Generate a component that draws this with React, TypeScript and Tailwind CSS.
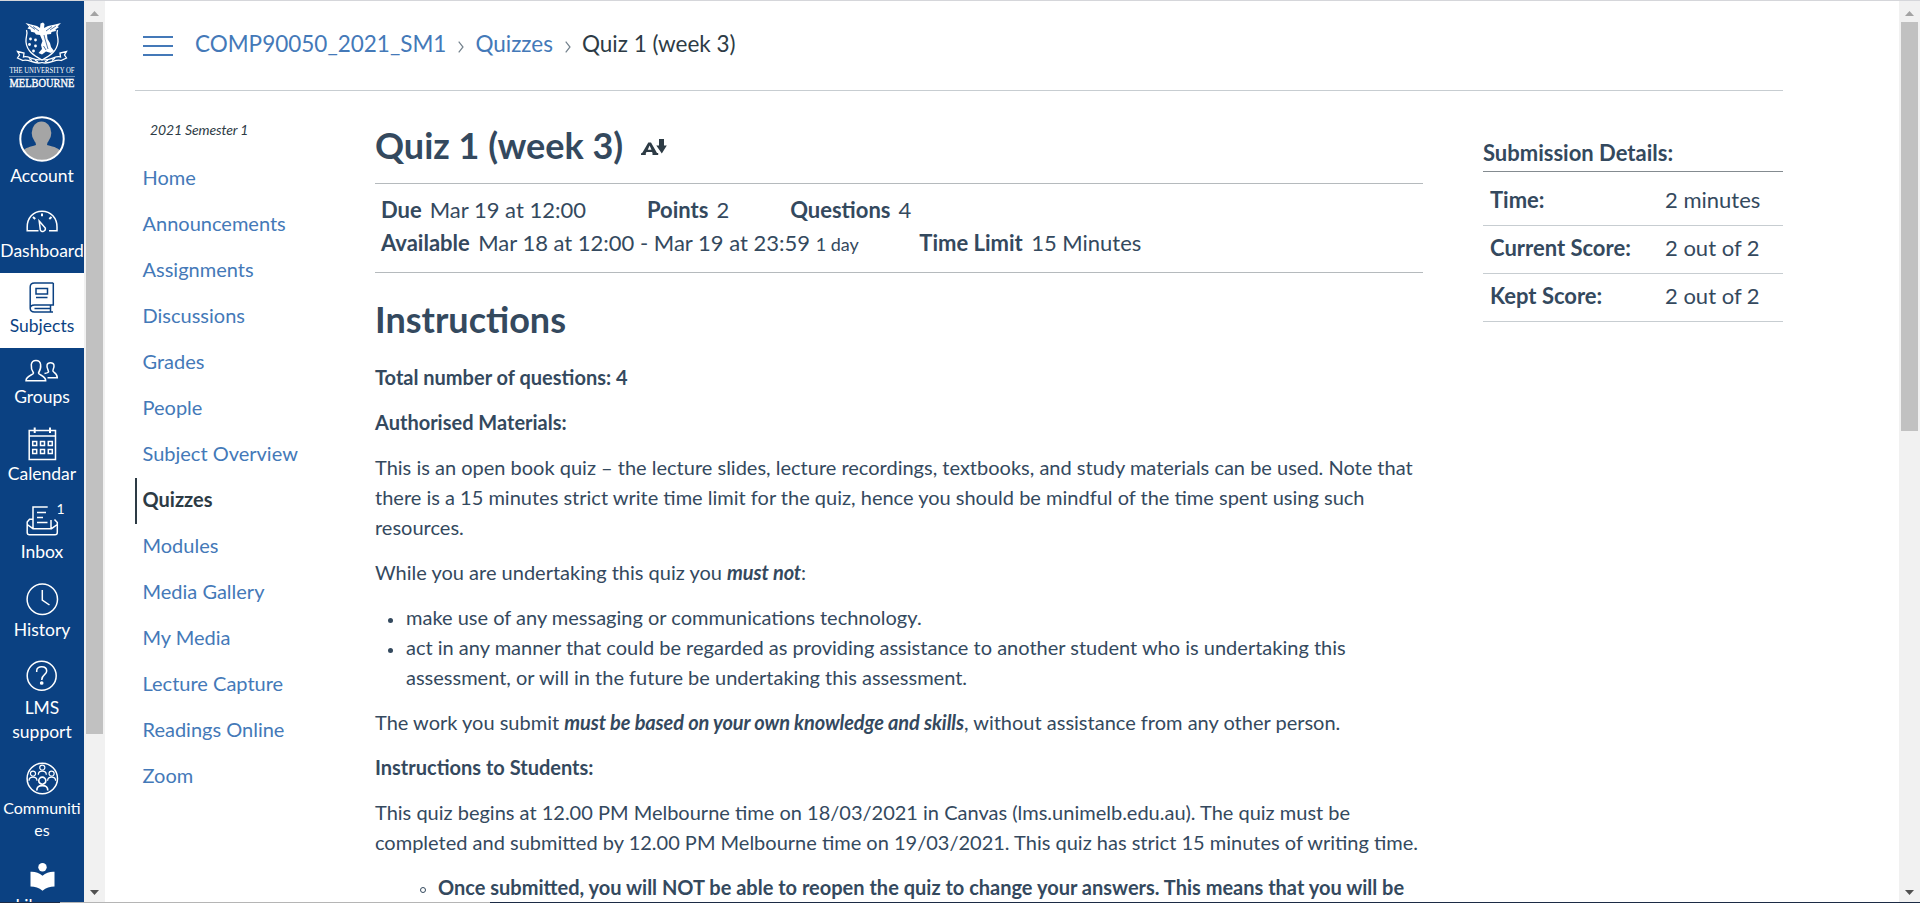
import React from "react";

type NavItem = { label: string; height: string; icon: React.ReactNode; active?: boolean; text: string };

const svgBase = {
  fill: "none",
  stroke: "currentColor",
  strokeWidth: 1.5,
};

function Crest() {
  return (
    <svg width="68" height="68" viewBox="-1 0 68 68" className="block overflow-visible">
      <g fill="none" stroke="#fff" strokeWidth="1.300">
        <path d="M17.500 8 C19 12 16.500 15 17 20 C18 29 24 33 33 38 C42 33 48 29 49 20 C49.500 15 47 12 48.500 8" />
        <path d="M8.500 29.500 L15 31 L14.500 35 C20 33 25 40 33 37.500 C41 40 46 33 51.500 35 L51 31 L57.500 29.500 L55.500 33 L57.500 36 L52 38.500 C46 36.500 41 43 33 40.500 C25 43 20 36.500 14 38.500 L8.500 36 L10.500 33Z" />
        <path d="M20 36.500 L23 38.500 M26 38 L29 40 M36 40 L39 38 M43 38.500 L46 36" />
      </g>
      <g fill="#fff">
        <path d="M16.500 1 L22 2.500 L28 4 L31 6 L31.500 1.500 L34 0.500 L35.500 2 L35 6 L39 4 L45 2.800 L52 1 L48.500 4.500 L50 5 L46.500 7.500 L47 9 L42.500 10 L42 12 L38 12.500 L38.500 17 L41 21 L42 25 L45 29 L42 31 L37 29.500 L33 32.500 L29.500 31 L33 27 L32 23 L33.500 19 L31 13 L27 12.500 L25.500 10.500 L22 9.800 L21.500 7.500 L18.500 6.500 L20 4.500Z" />
        <circle cx="21.500" cy="17" r="1.400" />
        <circle cx="26.500" cy="18" r="1.400" />
        <circle cx="20.500" cy="22.500" r="1.400" />
        <circle cx="26.500" cy="24" r="1.400" />
        <circle cx="24.500" cy="29" r="1.400" />
        <rect y="54" width="66" height="0.800" opacity="0.5" />
      </g>
      <path d="M24 4.500 L30 9 M43 4.500 L37 9 M20.500 3.500 L26 7.500 M47 4 L41 8 M36 17 L39 27 M34.500 24 L37 28 M35 13 L36 17" stroke="#0b4182" strokeWidth="0.700" fill="none" />
      <text x="0.500" y="50.700" textLength="65" lengthAdjust="spacingAndGlyphs" fontFamily="Liberation Serif, serif" fontSize="8.200" fill="#fff">THE UNIVERSITY OF</text>
      <text x="0.500" y="64.700" textLength="65" lengthAdjust="spacingAndGlyphs" fontFamily="Liberation Serif, serif" fontSize="11.500" stroke="#fff" strokeWidth="0.350" fill="#fff">MELBOURNE</text>
    </svg>
  );
}

const Avatar = () => (
  <svg width="46" height="46" viewBox="0 0 46 46">
    <defs>
      <clipPath id="face"><circle cx="23" cy="23" r="21.500" /></clipPath>
    </defs>
    <g clipPath="url(#face)" fill="#a5a5a5">
      <ellipse cx="22.500" cy="17" rx="9.800" ry="11.500" />
      <path d="M16 24 H29 L28 29 C36 31 40 32 43 37 L46 46 H0 L3 36 C7 31 11 31 17 29Z" />
    </g>
    <circle cx="23" cy="23" r="21.700" fill="none" stroke="#fff" strokeWidth="2" />
  </svg>
);

const Dash = () => (
  <svg width="33" height="23" viewBox="0 0 33 23" {...svgBase}>
    <path d="M12.500 20.700 H1.200 V17 C1.200 8 7 1.200 16 1.200 S31 8 31 17 V20.700 H23" />
    <path d="M13.200 11 L19.300 18 C20 21.500 15.300 23 14.300 19.700Z" />
    <path d="M16 3.500 V6.200 M7 7 L9.200 9 M25.500 7 L23.300 9" strokeWidth="2" />
  </svg>
);
const Book = () => (
  <svg width="26" height="31" viewBox="0 0 26 31" {...svgBase}>
    <path d="M24.300 1 V23 H5.500 C2.500 23 1.200 24.500 1.200 26.300 C1.200 28.500 2.500 30 5.500 30 H24 M5.500 1 H24.300 M5.500 1 C2.500 1 1.200 2.500 1.200 5 V26.300" />
    <path d="M7 6.500 H18.500 V12 H7Z M7 15.500 H18.500 M5.500 26.500 H22 M21.500 23 V30" />
  </svg>
);
const People = () => (
  <svg width="34" height="23" viewBox="0 0 34 23" {...svgBase}>
    <path d="M8.500 14 C6.500 11 6 8 6.300 5.500 C7 0 15 0 15.600 5.500 C16 8 15.300 11 13.500 14 C13.300 16 20.700 16.500 20.700 21.700 H1 C1 16.500 8.700 16 8.500 14Z" />
    <path d="M19.500 14.500 C22.500 14 24.500 13.500 23 11 C21.200 7 21.500 3.700 25.500 3.700 C29.500 3.700 29.800 7 28 11 C26.500 13.500 32.300 13 32.300 18.700 H22.500" />
  </svg>
);
const Cal = () => (
  <svg width="29" height="34" viewBox="0 0 29 34" {...svgBase}>
    <path d="M1.200 3.500 H27.500 V32.500 H1.200Z M1.200 9 H27.500" />
    <path d="M6.700 0.500 V6 M22 0.500 V6" strokeWidth="2" />
    <path d="M4.700 14.500 h4 v4 h-4Z M12.500 14.500 h4 v4 h-4Z M20.300 14.500 h4 v4 h-4Z M4.700 22.500 h4 v4 h-4Z M12.500 22.500 h4 v4 h-4Z M20.300 22.500 h4 v4 h-4Z" />
  </svg>
);
const Inbox = () => (
  <div className="relative flex">
    <svg width="33" height="30" viewBox="0 0 33 30" {...svgBase}>
      <path d="M7 22.500 V1 H21.700 M25 14 V22.500 M6.500 13.200 H3.500 L1.200 16 V26.500 C1.200 28 2 28.800 3.500 28.800 H29 C30.500 28.800 31.300 28 31.300 26.500 V16.500 L28.500 13.500 M1.200 18.500 L7 22.700 H25.500 L31.300 18.500 M11 6.500 H20 M11 11.500 H17 M11 16.500 H21.500" />
    </svg>
    <span className="absolute left-[31px] top-[-6px] text-[14px] leading-[18px]">1</span>
  </div>
);
const History = () => (
  <svg width="33" height="33" viewBox="0 0 33 33" {...svgBase}>
    <circle cx="16.300" cy="16.300" r="15.200" />
    <path d="M16.300 7 V17 L23.500 22" />
  </svg>
);
const Help = () => (
  <svg width="33" height="32" viewBox="0 0 33 32" {...svgBase}>
    <circle cx="15.700" cy="15.800" r="14.500" />
    <path d="M10.700 12 V10.500 C10.700 5.500 20.700 5.500 20.700 11 C20.700 15 15.700 14.500 15.700 20" />
    <circle cx="15.700" cy="23" r="1.100" fill="currentColor" />
  </svg>
);
function Person({ x, y, s }: { x: number; y: number; s: number }) {
  return (
    <g transform={`translate(${x} ${y}) scale(${s})`}>
      <circle cx="0" cy="-3" r="3.200" />
      <path d="M-5 6 C-5 2 -3 1.500 0 1.500 S5 2 5 6" />
    </g>
  );
}
const Communities = () => (
  <svg width="33" height="33" viewBox="0 0 33 33" {...svgBase}>
    <circle cx="16.300" cy="16.500" r="15.200" />
    <Person x={16.3} y={8} s={0.8} />
    <Person x={7} y={14} s={0.8} />
    <Person x={25.6} y={14} s={0.8} />
    <Person x={16.3} y={22} s={1.1} />
  </svg>
);
const Library = () => (
  <svg width="25" height="28" viewBox="0 0 25 28" fill="currentColor">
    <circle cx="12.500" cy="4.200" r="4.200" />
    <path d="M0.500 8.800 C5 8.500 9 9.700 12.500 12.700 C16 9.700 20 8.500 24.500 8.800 V23.500 C20 23.500 16 24.500 12.500 27.700 C9 24.500 5 23.500 0.500 23.500Z" />
  </svg>
);

const navItems: NavItem[] = [
  { label: "Account", height: "h-[83px] pt-[4px]", icon: <Avatar />, text: "mt-px" },
  { label: "Dashboard", height: "h-[78px] pt-[15px]", icon: <Dash />, text: "mt-[5px]" },
  { label: "Subjects", height: "h-[75px] pt-[9px]", icon: <Book />, active: true, text: "" },
  { label: "Groups", height: "h-[71px] pt-[11px]", icon: <People />, text: "mt-[2px]" },
  { label: "Calendar", height: "h-[77px] pt-[8px]", icon: <Cal />, text: "" },
  { label: "Inbox", height: "h-[81px] pt-[10px]", icon: <Inbox />, text: "mt-[3px]" },
  { label: "History", height: "h-[77px] pt-[6px]", icon: <History />, text: "mt-px" },
];

const menu = ["Home", "Announcements", "Assignments", "Discussions", "Grades", "People", "Subject Overview", "Quizzes", "Modules", "Media Gallery", "My Media", "Lecture Capture", "Readings Online", "Zoom"];

const scores = [
  ["Time:", "2 minutes", "h-[54px] pt-[2px]"],
  ["Current Score:", "2 out of 2", "h-[48px] pb-[3px]"],
  ["Kept Score:", "2 out of 2", "h-[48px] pb-[3px]"],
];

function Scrollbar({ thumb }: { thumb: string }) {
  return (
    <div className="flex h-full w-[21px] shrink-0 flex-col items-center bg-[#f1f1f1]">
      <div className="flex h-[21px] items-center pt-[3px]">
        <svg width="9" height="5" viewBox="0 0 9 5"><path d="M0 5 L4.500 0 L9 5Z" fill="#a3a3a3" /></svg>
      </div>
      <div className={`w-[17px] bg-[#c1c1c1] ${thumb}`} />
      <div className="mt-auto mb-[7px] flex">
        <svg width="9" height="5" viewBox="0 0 9 5"><path d="M0 0 L4.500 5 L9 0Z" fill="#505050" /></svg>
      </div>
    </div>
  );
}

const Chevron = () => (
  <svg width="6" height="12" viewBox="0 0 6 12" fill="none" stroke="#73818c" strokeWidth="1.200" className="mr-[11px] ml-[12px] mt-[5px]"><path d="M0.700 0.700 L5 6 L0.700 11.300" /></svg>
);

function Bullet({ children }: { children: React.ReactNode }) {
  return (
    <li className="flex">
      <i className="mt-[16px] mr-[13px] ml-[13px] size-[5px] shrink-0 rounded-full bg-[#34495e]" />
      <span>{children}</span>
    </li>
  );
}

export default function App() {
  return (
    <div className="flex h-[903px] w-[1920px] flex-col overflow-hidden bg-white font-['Lato',sans-serif] text-[20px] leading-[30px] text-[#2d3b45]">
      <div className="h-px shrink-0 bg-[#d5d6da]" />
      <div className="flex min-h-0 flex-1">
        <nav className="flex h-full w-[84px] shrink-0 flex-col overflow-hidden bg-[#0b4182] text-[17.500px] text-white">
          <div className="flex h-[111px] shrink-0 justify-center pt-[21px]"><Crest /></div>
          {navItems.map((n) => (
            <div key={n.label} className={`flex shrink-0 flex-col items-center ${n.height} ${n.active ? "bg-white text-[#0b4182]" : ""}`}>
              {n.icon}
              <span className={`leading-[26px] ${n.text}`}>{n.label}</span>
            </div>
          ))}
          <div className="flex h-[100px] shrink-0 flex-col items-center pt-[6px]">
            <Help />
            <span className="mt-[4px] text-center leading-[24px]">LMS<br />support</span>
          </div>
          <div className="flex h-[101px] shrink-0 flex-col items-center pt-[8px]">
            <Communities />
            <span className="mt-[2px] text-center text-[16px] leading-[22px]">Communiti<br />es</span>
          </div>
          <div className="flex flex-col items-center pt-[8px]"><Library /><span className="mt-[4px] leading-[22px]">Library</span></div>
        </nav>
        <Scrollbar thumb="h-[712px]" />
        <main className="ml-[30px] flex w-[1648px] shrink-0 flex-col">
          <header className="flex h-[90px] shrink-0 items-start border-b border-[#c7cdd1] pt-[28px] text-[22.500px]">
            <div className="mt-[7px] ml-[8px] mr-[22px] flex h-5 w-[30px] flex-col justify-between">
              <i className="h-[2px] bg-[#4479b8]" /><i className="h-[2px] bg-[#4479b8]" /><i className="h-[2px] bg-[#4479b8]" />
            </div>
            <div className="flex items-center">
              <a className="text-[#4479b8]">COMP90050_2021_SM1</a><Chevron /><a className="text-[#4479b8]">Quizzes</a><Chevron /><span>Quiz 1 (week 3)</span>
            </div>
          </header>
          <div className="flex">
            <aside className="w-[240px] shrink-0 pt-[24px]">
              <p className="pl-[15px] text-[14px] leading-[30px] tracking-[-0.130px] italic">2021 Semester 1</p>
              <ul className="mt-[11px]">
                {menu.map((m) => (
                  <li key={m} className={`flex h-[46px] items-center pb-[4px] ${m === "Quizzes" ? "border-l-2 border-[#2d3b45] pl-[5.500px] font-bold" : "pl-[7.500px] text-[#4479b8]"}`}>{m}</li>
                ))}
              </ul>
            </aside>
            <article className="w-[1048px] shrink-0 text-[#34495e]">
              <div className="flex h-[93px] items-start border-b border-[#b5babd] pt-[27px]">
                <h1 className="text-[36px] leading-[54px] font-bold">Quiz 1 (week 3)</h1>
                <svg width="27" height="18" viewBox="0 0 27 18" className="mt-[20px] ml-[18px]" fill="#2d3b45">
                  <path fillRule="evenodd" d="M7.300 4.500 H10 L16 15 H17.200 V17 H11.500 V15 L11 14 H5.500 L4.800 15.200 V17 H0 V15.500 L1.500 14.500Z M6.800 11.800 H10.500 L8.600 7.500Z" />
                  <path d="M18 1 H23 V7.500 H25.800 L20.800 15.500 L15.300 7.500 H18Z" />
                </svg>
              </div>
              <div className="flex h-[89px] flex-col border-b border-[#b5babd] pt-[9px] pl-[6px] text-[22px] leading-[33px]">
                <div className="flex gap-[61px]"><span><b className="mr-[8px]">Due</b>Mar 19 at 12:00</span><span><b className="mr-[8px]">Points</b>2</span><span><b className="mr-[8px]">Questions</b>4</span></div>
                <div className="flex gap-[60.500px]"><span><b className="mr-[8.400px]">Available</b>Mar 18 at 12:00 - Mar 19 at 23:59 <small className="text-[18px]">1 day</small></span><span><b className="mr-[8.400px]">Time Limit</b>15 Minutes</span></div>
              </div>
              <h2 className="mt-[19px] text-[36px] leading-[54px] font-bold">Instructions</h2>
              <div className="mt-[16px] flex flex-col gap-[15px] whitespace-nowrap">
                <p className="font-bold">Total number of questions: 4</p>
                <p className="font-bold">Authorised Materials:</p>
                <p>This is an open book quiz – the lecture slides, lecture recordings, textbooks, and study materials can be used. Note that<br />there is a 15 minutes strict write time limit for the quiz, hence you should be mindful of the time spent using such<br />resources.</p>
                <p>While you are undertaking this quiz you <b className="tracking-[-0.110px] italic">must not</b>:</p>
                <ul>
                  <Bullet>make use of any messaging or communications technology.</Bullet>
                  <Bullet>act in any manner that could be regarded as providing assistance to another student who is undertaking this<br />assessment, or will in the future be undertaking this assessment.</Bullet>
                </ul>
                <p>The work you submit <b className="tracking-[-0.120px] italic">must be based on your own knowledge and skills</b>, without assistance from any other person.</p>
                <p className="font-bold">Instructions to Students:</p>
                <p>This quiz begins at 12.00 PM Melbourne time on 18/03/2021 in Canvas (lms.unimelb.edu.au). The quiz must be<br />completed and submitted by 12.00 PM Melbourne time on 19/03/2021. This quiz has strict 15 minutes of writing time.</p>
                <ul className="pl-[45px] font-bold">
                  <li className="flex"><i className="mt-[15px] mr-[12px] size-[6px] shrink-0 rounded-full border border-[#34495e]" />Once submitted, you will NOT be able to reopen the quiz to change your answers. This means that you will be</li>
                </ul>
              </div>
            </article>
            <aside className="ml-[60px] w-[300px] shrink-0 pt-[46px] text-[22px] text-[#34495e]">
              <h2 className="h-[35px] border-b border-[#848b90] text-[22px] leading-[31px] font-bold">Submission Details:</h2>
              {scores.map(([k, v, h]) => (
                <div key={k} className={`flex items-center border-b border-[#c7cdd1] pl-[7px] ${h}`}>
                  <b className="w-[175px]">{k}</b><span>{v}</span>
                </div>
              ))}
            </aside>
          </div>
        </main>
        <div className="ml-auto flex"><Scrollbar thumb="h-[409px]" /></div>
      </div>
      <div className="flex h-px shrink-0"><i className="w-[60px] bg-[#1c2b45]" /><i className="w-[430px] bg-[#b5b5b5]" /><i className="flex-1 bg-[#1c2b45]" /></div>
    </div>
  );
}
